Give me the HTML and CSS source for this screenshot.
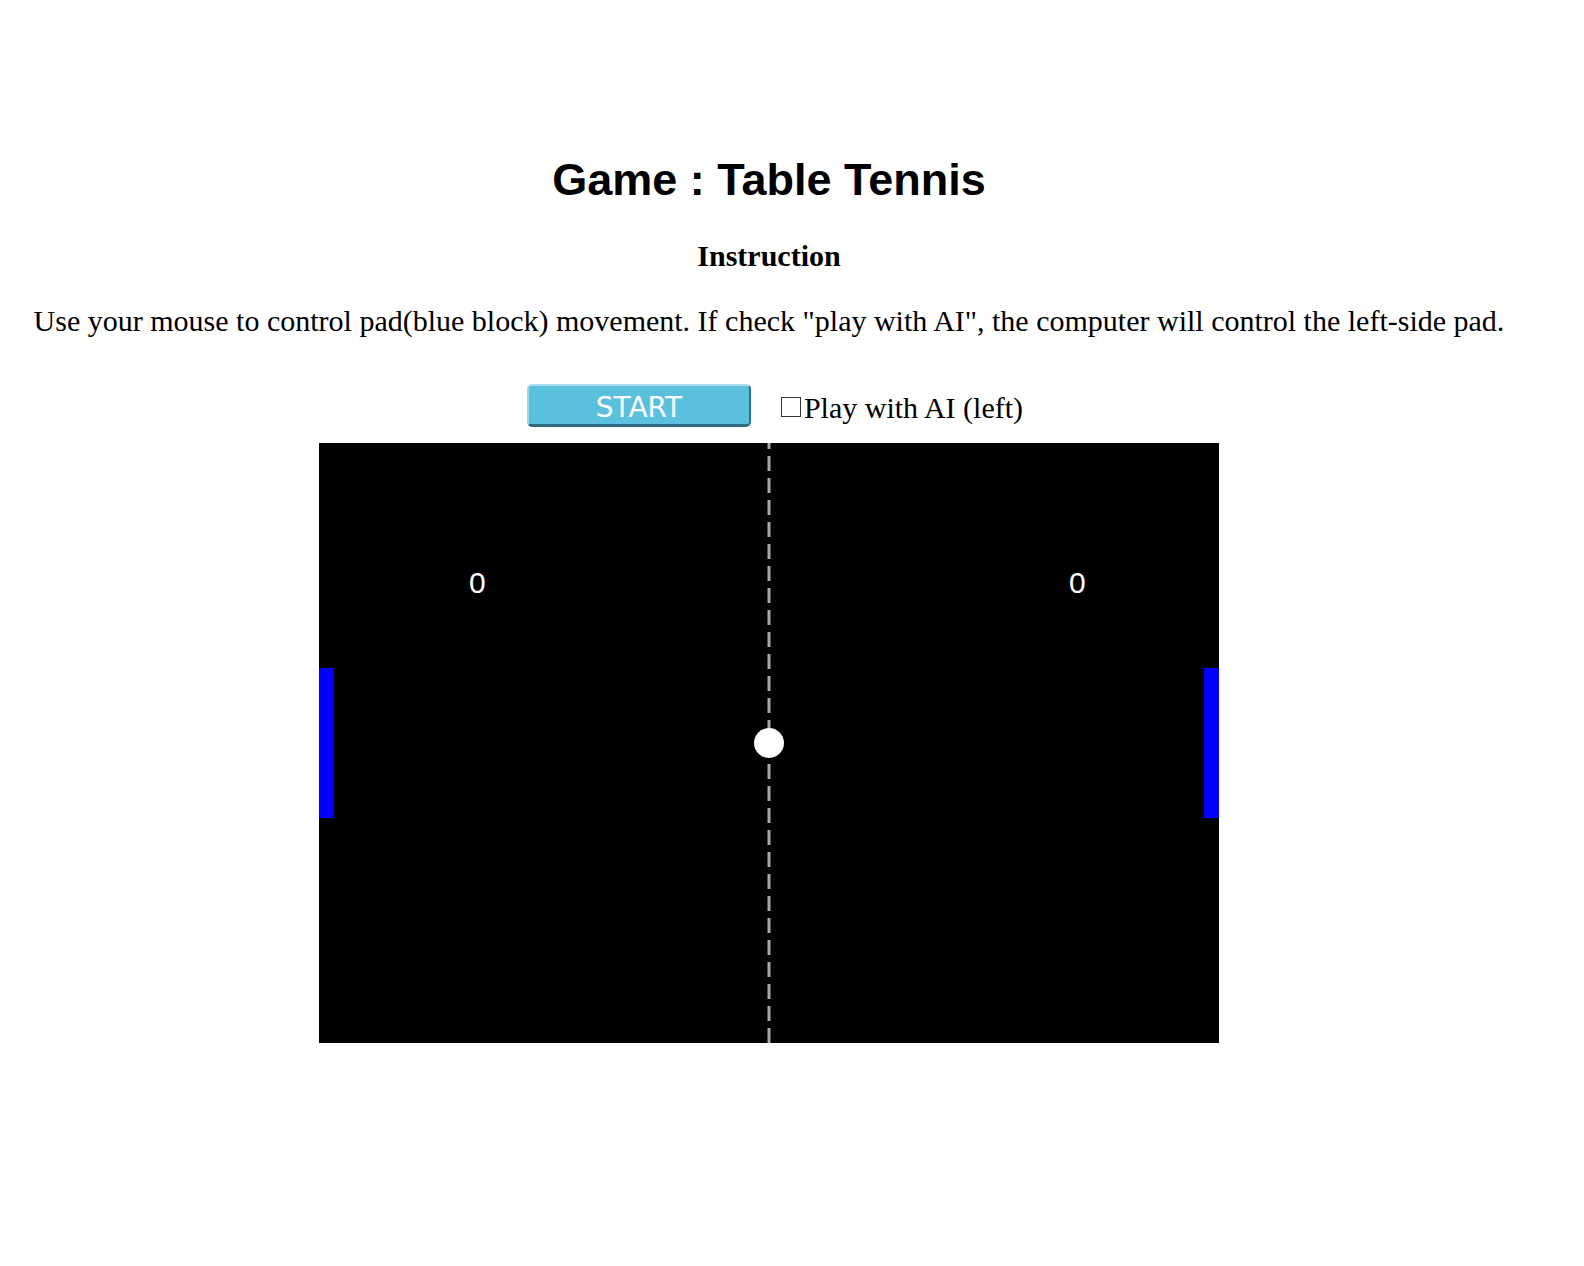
FILE: index.html
```html
<!DOCTYPE html>
<html lang="en">
<head>
<meta charset="utf-8">
<title>Game : Table Tennis</title>
<link rel="stylesheet" href="styles.css">
</head>
<body>
<div class="page">
  <h1 class="title">Game : Table Tennis</h1>
  <h4 class="subtitle">Instruction</h4>
  <p class="instr">Use your mouse to control pad(blue block) movement. If check "play with AI", the computer will control the left-side pad.</p>
  <div class="controls">
    <button class="start" type="button">START</button>
    <label class="ai"><span class="box"></span>Play with AI (left)</label>
  </div>
  <div class="board">
    <svg class="court" width="900" height="600" viewBox="0 0 900 600" xmlns="http://www.w3.org/2000/svg">
      <rect x="0" y="0" width="900" height="600" fill="#000"/>
      <line x1="450" y1="600" x2="450" y2="0" stroke="#a9a9a9" stroke-width="3" stroke-dasharray="15 7"/>
      <text class="score" x="150" y="150">0</text>
      <text class="score" x="750" y="150">0</text>
      <rect x="0" y="225" width="15" height="150" fill="#0000ff"/>
      <rect x="885" y="225" width="15" height="150" fill="#0000ff"/>
      <circle cx="450" cy="300" r="15" fill="#fff"/>
    </svg>
  </div>
</div>
</body>
</html>
```

FILE: styles.css
```css
html, body {
  margin: 0;
  padding: 0;
  background: #fff;
}

.page {
  width: 1538px;
  display: flex;
  flex-direction: column;
  align-items: center;
  text-align: center;
  font-family: "Liberation Serif", "Times New Roman", serif;
  color: #000;
}

.title {
  margin: 155px 0 0;
  font-family: "Liberation Sans", Arial, sans-serif;
  font-weight: bold;
  font-size: 45px;
  line-height: 50px;
}

.subtitle {
  margin: 34px 0 0;
  font-weight: bold;
  font-size: 30px;
  line-height: 34px;
}

.instr {
  margin: 31px 0 0;
  font-size: 30px;
  line-height: 34px;
  white-space: nowrap;
}

.controls {
  margin-top: 46px;
  display: flex;
  align-items: center;
  padding-left: 12px;
  height: 43px;
}

.start {
  width: 224px;
  height: 43px;
  box-sizing: border-box;
  background: #5bc0de;
  color: #fff;
  font-family: "DejaVu Sans", Verdana, sans-serif;
  font-size: 28px;
  line-height: 34px;
  padding: 5px 0 0 0;
  border-style: solid;
  border-width: 2px 2px 3px 2px;
  border-color: #a6dcec #2f7486 #2b6d7e #9fd6e8;
  border-radius: 5px;
}

.ai {
  margin-left: 30px;
  display: flex;
  align-items: center;
  font-size: 30px;
  line-height: 34px;
  padding-top: 4px;
}

.box {
  width: 18px;
  height: 18px;
  border: 1px solid #333;
  margin-right: 3px;
  margin-top: -2px;
  background: #fff;
}

.board {
  margin-top: 16px;
  width: 900px;
  height: 600px;
}

.court {
  display: block;
}

.score {
  font-family: "Liberation Sans", Arial, sans-serif;
  font-size: 30px;
  fill: #fff;
}
```
